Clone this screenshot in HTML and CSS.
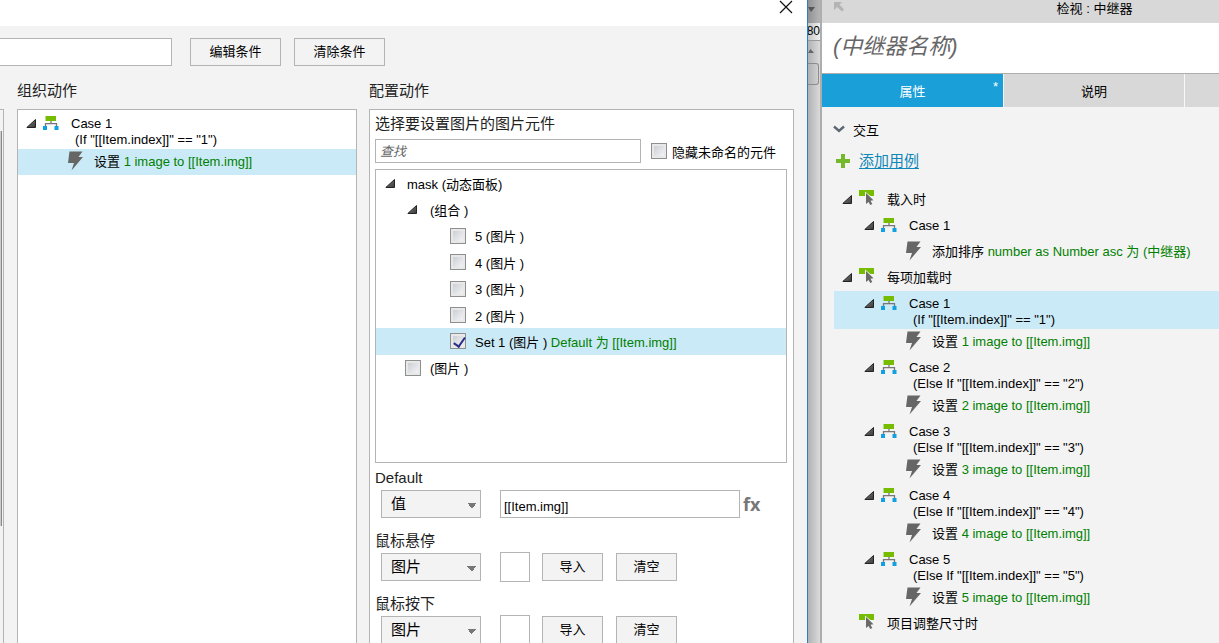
FILE: index.html
```html
<!DOCTYPE html>
<html lang="zh-CN">
<head>
<meta charset="utf-8">
<title>用例编辑</title>
<link rel="stylesheet" href="styles.css">
</head>
<body>
<svg class="sprite" aria-hidden="true">
  <defs>
    <linearGradient id="tri-fill" x1="0" y1="0" x2="1" y2="1">
      <stop offset="0.3" stop-color="#6a6a6a"/><stop offset="1" stop-color="#3a3a3a"/>
    </linearGradient>
  </defs>
  <symbol id="tri" viewBox="0 0 10 9"><path d="M9.5 .5V8.5H.8Z" fill="url(#tri-fill)" stroke="#222" stroke-width="1"/></symbol>
  <symbol id="case" viewBox="0 0 16 14">
    <path d="M8 5V7.500M2.500 11V7.700H13.500V11" fill="none" stroke="#777" stroke-width="1.300"/>
    <path d="M2.500 0H13V5H2.500Z" fill="#76bc00"/>
    <path d="M0 10H4V14H0ZM11.500 10H15.500V14H11.500Z" fill="#12a0de"/>
  </symbol>
  <symbol id="bolt" viewBox="0 0 15 20"><path d="M1.500 .5H14.500L10.500 6H15L3.500 19.500L6 12H0Z" fill="#666"/></symbol>
  <symbol id="event" viewBox="0 0 15 15">
    <path d="M0 0H15V6H11.500L6 1.500V6H0Z" fill="#76bc00"/>
    <path d="M7 3L14.500 10.300L11.500 10.800L13.300 14L11.200 15L9.600 12L7 14Z" fill="#6a6a6a"/>
  </symbol>
</svg>

<div class="app">
  <section class="dialog">
    <header class="dialog-title">
      <button class="close" aria-label="关闭"><svg viewBox="0 0 14 14"><path d="M1 1L13 13M13 1L1 13" stroke="#111" stroke-width="1.200"/></svg></button>
    </header>

    <div class="toolbar">
      <input class="case-name" type="text" aria-label="用例名称">
      <button class="btn wide">编辑条件</button>
      <button class="btn wide">清除条件</button>
    </div>

    <div class="columns">
      <div class="prev-list"><span class="prev-thumb"></span></div>

      <section class="column">
        <h2>组织动作</h2>
        <div class="panel">
          <div class="row case"><button class="toggle" aria-label="折叠"><svg><use href="#tri"/></svg></button><svg class="ico-case"><use href="#case"/></svg><span class="label">Case 1<br><span class="cond">(If "[[Item.index]]" == "1")</span></span></div>
          <div class="row action selected"><svg class="ico-bolt"><use href="#bolt"/></svg><span class="label">设置 <em>1 image to [[Item.img]]</em></span></div>
        </div>
      </section>

      <section class="column">
        <h2>配置动作</h2>
        <div class="panel config">
          <h3>选择要设置图片的图片元件</h3>
          <div class="search-row">
            <input class="search" type="text" placeholder="查找" aria-label="查找">
            <label class="check"><input type="checkbox"><span>隐藏未命名的元件</span></label>
          </div>

          <div class="widgets">
            <div class="widget-list">
              <div class="widget lv0"><button class="toggle" aria-label="折叠"><svg><use href="#tri"/></svg></button><span>mask (动态面板)</span></div>
              <div class="widget lv1"><button class="toggle" aria-label="折叠"><svg><use href="#tri"/></svg></button><span>(组合 )</span></div>
              <label class="widget lv2"><input type="checkbox"><span>5 (图片 )</span></label>
              <label class="widget lv2"><input type="checkbox"><span>4 (图片 )</span></label>
              <label class="widget lv2"><input type="checkbox"><span>3 (图片 )</span></label>
              <label class="widget lv2"><input type="checkbox"><span>2 (图片 )</span></label>
              <label class="widget lv2 selected"><input type="checkbox" checked><span>Set 1 (图片 ) <em>Default 为 [[Item.img]]</em></span></label>
              <label class="widget lv1"><input type="checkbox"><span>(图片 )</span></label>
            </div>
          </div>

          <div class="field">
            <label for="f-default">Default</label>
            <div class="field-row">
              <select id="f-default"><option>值</option></select>
              <input class="value" type="text" value="[[Item.img]]" aria-label="值">
              <button class="fx">fx</button>
            </div>
          </div>
          <div class="field">
            <label for="f-hover">鼠标悬停</label>
            <div class="field-row">
              <select id="f-hover"><option>图片</option></select>
              <span class="thumb"></span>
              <button class="btn">导入</button>
              <button class="btn">清空</button>
            </div>
          </div>
          <div class="field">
            <label for="f-down">鼠标按下</label>
            <div class="field-row">
              <select id="f-down"><option>图片</option></select>
              <span class="thumb"></span>
              <button class="btn">导入</button>
              <button class="btn">清空</button>
            </div>
          </div>
        </div>
      </section>
    </div>
  </section>

  <div class="canvas-edge">
    <div class="edge-top"><svg viewBox="0 0 8 6"><path d="M0 0H7L3 5Z" fill="#555"/></svg></div>
    <div class="edge-ruler"><span>80</span></div>
    <div class="edge-up"><svg viewBox="0 0 8 6"><path d="M0 5H6L2.500 1Z" fill="#666"/></svg></div>
    <div class="edge-thumb"></div>
  </div>

  <aside class="inspector">
    <header class="inspector-title">
      <svg class="nw" viewBox="0 0 10 10"><path d="M0 0H8L5.500 2.500L10 7.500L8 9.500L3 5L0 8Z" fill="#b4b4b4"/></svg>
      <span>检视 : 中继器</span>
    </header>
    <div class="name"><input type="text" placeholder="(中继器名称)" aria-label="中继器名称"></div>
    <nav class="tabs">
      <button class="tab active">属性<sup>*</sup></button>
      <button class="tab">说明</button>
      <button class="tab" aria-label="样式"></button>
    </nav>
    <div class="section-head">
      <svg viewBox="0 0 12 8"><path d="M1 1.500L6 6L11 1.500" fill="none" stroke="#5d6673" stroke-width="2.400"/></svg>
      <span>交互</span>
    </div>
    <div class="add-case">
      <svg viewBox="0 0 14 14"><path d="M5 0H9V5H14V9H9V14H5V9H0V5H5Z" fill="#73b92b"/></svg>
      <a href="#">添加用例</a>
    </div>

    <div class="events">
      <div class="row event"><button class="toggle" aria-label="折叠"><svg><use href="#tri"/></svg></button><svg class="ico-event"><use href="#event"/></svg><span class="label">载入时</span></div>
      <div class="row case"><button class="toggle" aria-label="折叠"><svg><use href="#tri"/></svg></button><svg class="ico-case"><use href="#case"/></svg><span class="label">Case 1</span></div>
      <div class="row action"><svg class="ico-bolt"><use href="#bolt"/></svg><span class="label">添加排序 <em>number as Number asc 为 (中继器)</em></span></div>
      <div class="row event"><button class="toggle" aria-label="折叠"><svg><use href="#tri"/></svg></button><svg class="ico-event"><use href="#event"/></svg><span class="label">每项加载时</span></div>

      <div class="row case selected"><button class="toggle" aria-label="折叠"><svg><use href="#tri"/></svg></button><svg class="ico-case"><use href="#case"/></svg><span class="label">Case 1<br><span class="cond">(If "[[Item.index]]" == "1")</span></span></div>
      <div class="row action"><svg class="ico-bolt"><use href="#bolt"/></svg><span class="label">设置 <em>1 image to [[Item.img]]</em></span></div>
      <div class="row case"><button class="toggle" aria-label="折叠"><svg><use href="#tri"/></svg></button><svg class="ico-case"><use href="#case"/></svg><span class="label">Case 2<br><span class="cond">(Else If "[[Item.index]]" == "2")</span></span></div>
      <div class="row action"><svg class="ico-bolt"><use href="#bolt"/></svg><span class="label">设置 <em>2 image to [[Item.img]]</em></span></div>
      <div class="row case"><button class="toggle" aria-label="折叠"><svg><use href="#tri"/></svg></button><svg class="ico-case"><use href="#case"/></svg><span class="label">Case 3<br><span class="cond">(Else If "[[Item.index]]" == "3")</span></span></div>
      <div class="row action"><svg class="ico-bolt"><use href="#bolt"/></svg><span class="label">设置 <em>3 image to [[Item.img]]</em></span></div>
      <div class="row case"><button class="toggle" aria-label="折叠"><svg><use href="#tri"/></svg></button><svg class="ico-case"><use href="#case"/></svg><span class="label">Case 4<br><span class="cond">(Else If "[[Item.index]]" == "4")</span></span></div>
      <div class="row action"><svg class="ico-bolt"><use href="#bolt"/></svg><span class="label">设置 <em>4 image to [[Item.img]]</em></span></div>
      <div class="row case"><button class="toggle" aria-label="折叠"><svg><use href="#tri"/></svg></button><svg class="ico-case"><use href="#case"/></svg><span class="label">Case 5<br><span class="cond">(Else If "[[Item.index]]" == "5")</span></span></div>
      <div class="row action"><svg class="ico-bolt"><use href="#bolt"/></svg><span class="label">设置 <em>5 image to [[Item.img]]</em></span></div>
      <div class="row event leaf"><svg class="ico-event"><use href="#event"/></svg><span class="label">项目调整尺寸时</span></div>
    </div>
  </aside>
</div>
</body>
</html>
```

FILE: styles.css
```css
* { box-sizing: border-box; }

body, button, input, select {
  font-family: "Liberation Sans", "Noto Sans CJK SC", sans-serif;
  font-size: 13px;
  color: #000;
}

body { margin: 0; background: #f3f3f3; }

button, input, select { margin: 0; padding: 0; border-radius: 0; outline: none; }
svg { display: block; flex: none; }
em { font-style: normal; color: #008000; }
h2, h3 { margin: 0; font-size: 15px; font-weight: 400; color: #222; }

.sprite { position: absolute; width: 0; height: 0; }

.app {
  display: grid;
  grid-template-columns: 808fr 14px 397fr;
  height: 100vh;
  overflow: hidden;
}

/* Dialog */
.dialog {
  display: flex;
  flex-direction: column;
  min-width: 0;
  min-height: 0;
  border-right: 1px solid #2b80c4;
}

.dialog-title {
  display: flex;
  justify-content: flex-end;
  flex: none;
  height: 26px;
  padding-right: 14px;
  background: #fff;
}

.close { width: 14px; height: 14px; border: 0; background: none; }
.close svg { width: 14px; height: 14px; }

.toolbar {
  display: flex;
  gap: 13px;
  flex: none;
  padding-top: 12px;
}

.case-name {
  width: 172px;
  height: 28px;
  margin-right: 5px;
  border: 1px solid #b4b4b4;
  border-left: 0;
  background: #fff;
}

.btn {
  width: 61px;
  height: 28px;
  border: 1px solid #b4b4b4;
  background: #f3f3f3;
  line-height: 24px;
}
.btn.wide { width: 91px; }

.columns {
  display: grid;
  grid-template-columns: 4px 353fr 437fr;
  flex: 1;
  min-height: 0;
  padding: 11px 13px 0 0;
}

.column { display: flex; flex-direction: column; min-width: 0; min-height: 0; margin-left: 12px; }
.prev-list + .column { margin-left: 13px; }

.column h2 { flex: none; height: 32px; line-height: 28px; }

.panel {
  flex: 1;
  min-height: 0;
  overflow: hidden;
  padding-top: 1px;
  border: 1px solid #b4b4b4;
  border-bottom: 0;
  background: #fff;
}

.prev-list {
  margin-top: 32px;
  padding-top: 21px;
  border-top: 1px solid #b4b4b4;
  border-right: 1px solid #b4b4b4;
}
.prev-thumb {
  display: block;
  width: 2px;
  height: 395px;
  border-right: 1px solid #888;
  background: #ccc;
}

/* Case and action rows */
.row { display: flex; align-items: flex-start; min-height: 26px; white-space: nowrap; }
.row.case { padding-left: 8px; }
.row.action { padding-left: 50px; }
.selected { background: #cbeaf7; }

.row .label { padding: 5px 0 1px; line-height: 16px; }
.cond { padding-left: 4px; }

.toggle { width: 10px; height: 9px; border: 0; background: none; }
.toggle svg { width: 10px; height: 9px; }
.row .toggle { margin: 8px 7px 0 0; }

.ico-case { width: 16px; height: 14px; margin: 5px 12px 0 0; }
.ico-bolt { width: 15px; height: 20px; margin: 2px 11px 0 0; }
.ico-event { width: 15px; height: 15px; margin: 3px 13px 0 0; }

/* Action configuration */
.config { padding: 1px 5px 0; }
.config h3 { height: 28px; line-height: 26px; }

.search-row { display: flex; align-items: center; gap: 10px; }
.search {
  flex: 1;
  min-width: 0;
  max-width: 266px;
  height: 24px;
  padding: 0 4px;
  border: 1px solid #b4b4b4;
}
.search::placeholder { color: #666; font-style: italic; opacity: 1; }

.check { display: flex; align-items: center; gap: 5px; white-space: nowrap; }

input[type="checkbox"] {
  appearance: none;
  flex: none;
  width: 16px;
  height: 16px;
  border: 1px solid #8e8f8f;
  background: linear-gradient(135deg, #c3c8cf, #fafafa);
  box-shadow: inset 0 0 0 2px #e8e8e8;
}
input[type="checkbox"]:checked { position: relative; }
input[type="checkbox"]:checked::after {
  content: "";
  position: absolute;
  left: 5px;
  top: 1px;
  width: 5px;
  height: 10px;
  border: solid #2b2f86;
  border-width: 0 2px 2px 0;
  transform: rotate(35deg);
}

.widgets {
  height: 294px;
  margin: 6px 1px 0 0;
  border: 1px solid #b4b4b4;
}
.widget-list { display: grid; grid-auto-rows: 1fr; height: 211px; }
.widget { display: flex; align-items: center; white-space: nowrap; }
.lv0 { padding-left: 9px; }
.lv1 { padding-left: 31px; }
.lv2 { padding-left: 74px; }
.lv0 .toggle { margin-right: 12px; }
.lv1 .toggle { margin-right: 13px; }
.lv2 input { margin-right: 9px; }
label.lv1 { padding-left: 29px; }
label.lv1 input { margin-right: 9px; }

.field { margin-bottom: 11px; }
.widgets + .field { margin-top: 4px; }
.field > label { display: block; height: 22px; line-height: 22px; font-size: 15px; color: #222; }
.field-row { display: flex; align-items: center; height: 30px; padding-left: 6px; }

select {
  appearance: none;
  width: 100px;
  height: 28px;
  margin-right: 19px;
  padding: 0 9px 2px;
  border: 1px solid #b4b4b4;
  background: linear-gradient(to bottom left, #777 50%, transparent 50%) 85px 12px / 5px 5px no-repeat,
    linear-gradient(to bottom right, #777 50%, transparent 50%) 90px 12px / 5px 5px no-repeat,
    #f3f3f3;
  font-size: 15px;
}

.value { flex: 1; max-width: 240px; min-width: 0; height: 28px; padding: 4px 3px 0; border: 1px solid #b4b4b4; }
.fx {
  margin-left: 3px;
  border: 0;
  background: none;
  color: #777;
  font: bold 18px/24px "Open Sans", sans-serif;
}
.thumb { width: 30px; height: 30px; margin-right: 12px; border: 1px solid #b4b4b4; background: #fff; }
.field-row .btn + .btn { margin-left: 13px; }

/* Sliver of the editor canvas between dialog and inspector */
.canvas-edge {
  display: flex;
  flex-direction: column;
  overflow: hidden;
  border-right: 2px solid #adadad;
  background: linear-gradient(to right, #b2b2b2, #dadada);
}
.edge-top { height: 23px; padding-top: 7px; background: linear-gradient(to right, #929292, #b5b5b5); }
.edge-top svg, .edge-up svg { width: 8px; height: 6px; }
.edge-ruler {
  display: flex;
  justify-content: flex-end;
  height: 18px;
  border-bottom: 1px solid #999;
  background: linear-gradient(to right, #c4c4c4, #f0f0f0);
  font-size: 12px;
  line-height: 17px;
}
.edge-up { height: 22px; padding-top: 7px; }
.edge-thumb {
  height: 22px;
  margin-right: 1px;
  border: 1px solid #8c8c8c;
  border-left: 0;
  border-radius: 0 3px 3px 0;
  background: linear-gradient(to right, #b0b0b0, #d0d0d0);
}

/* Inspector */
.inspector { min-width: 0; overflow: hidden; }

.inspector-title, .tabs { display: grid; grid-template-columns: 182px 181px 1fr; }
.inspector-title { height: 23px; background: #d8d8d8; line-height: 17px; text-align: center; }
.nw { width: 10px; height: 10px; margin: 2px 0 0 12px; }

.name { height: 51px; border-bottom: 1px solid #adadad; background: #fff; }
.name input {
  width: 100%;
  height: 48px;
  padding: 0 11px;
  border: 0;
  background: none;
  font-size: 22px;
}
.name input::placeholder { color: #666; font-style: italic; opacity: 1; }

.tab {
  position: relative;
  height: 33px;
  border: 0;
  border-right: 1px solid #f8f8f8;
  background: #d8d8d8;
}
.tab:last-child { border-right: 0; }
.tab.active { background: #1a9fd9; color: #fff; }
.tab sup { position: absolute; right: 5px; top: 6px; font-size: 13px; line-height: 13px; }

.section-head { display: flex; align-items: center; gap: 8px; height: 24px; margin-top: 10px; padding-left: 11px; }
.section-head svg { width: 12px; height: 8px; }

.add-case { display: flex; align-items: center; gap: 9px; height: 30px; margin-top: 5px; padding-left: 14px; }
.add-case svg { width: 14px; height: 14px; }
.add-case a { color: #0f86b8; font-size: 15px; line-height: 20px; text-underline-offset: 2px; }

.events { margin: 11px 0 0 12px; }
.events .row.event { padding-left: 8px; }
.events .row.event.leaf { padding-left: 25px; }
.events .row.case { padding-left: 30px; }
.events .row.action { padding-left: 72px; }
```
